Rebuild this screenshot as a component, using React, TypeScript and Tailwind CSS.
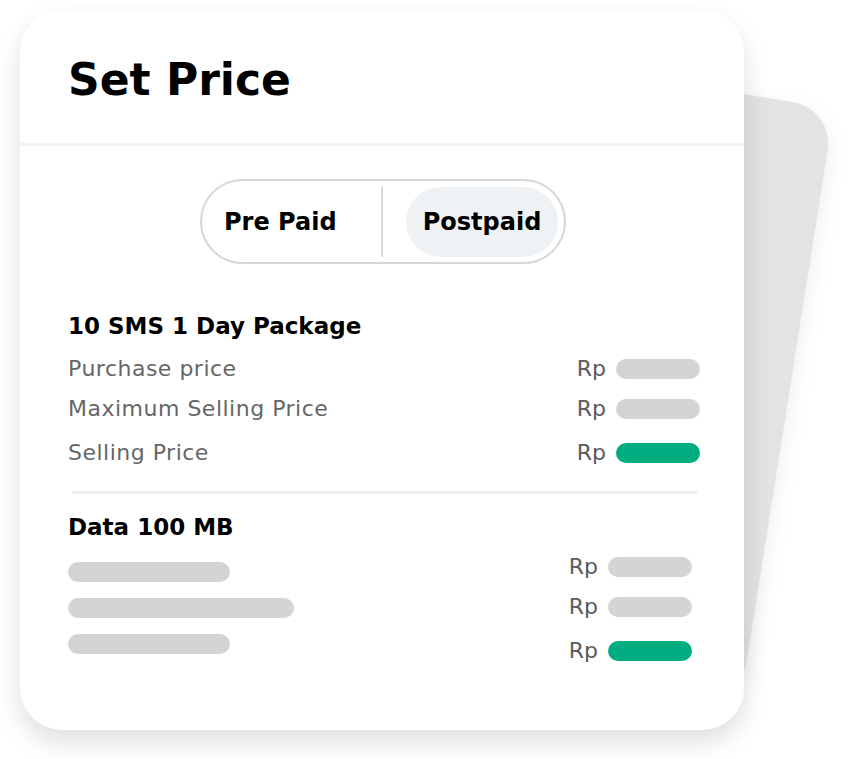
const font = { fontFamily: '"DejaVu Sans", "Liberation Sans", sans-serif' };

interface PriceRow {
  label: string;
  active?: boolean;
}

const smsRows: PriceRow[] = [
  { label: "Purchase price" },
  { label: "Maximum Selling Price" },
  { label: "Selling Price", active: true },
];

function PriceTag({ active }: { active?: boolean }) {
  return (
    <div className="flex items-center gap-[10px]">
      <span className="text-[22px] leading-none text-[#5a5a5a]">Rp</span>
      <div
        className={
          active
            ? "w-[84px] h-[20px] rounded-full bg-[#00ad80]"
            : "w-[84px] h-[20px] rounded-full bg-[#d4d4d6]"
        }
      />
    </div>
  );
}

export default function App() {
  return (
    <div
      className="relative w-[850px] h-[759px] bg-white overflow-hidden"
      style={font}
    >
      {/* tilted card behind */}
      <div className="absolute left-[191px] top-[58px] w-[600px] h-[600px] rounded-[42px] bg-[#e3e3e3] rotate-[9deg] shadow-[0_8px_24px_rgba(0,0,0,0.08)]" />

      <div className="relative ml-[20px] mt-[10px] w-[724px] h-[720px] rounded-[42px] bg-white shadow-[0_12px_26px_rgba(0,0,0,0.13)]">
        {/* header */}
        <div className="h-[133px] pl-[48px] pt-[48px]">
          <h1 className="text-[44px] leading-none font-bold text-black">
            Set Price
          </h1>
        </div>
        <div className="h-[3px] bg-[#f0f2f5]" />

        {/* toggle */}
        <div className="flex justify-center mt-[33px] pl-[2px]">
          <div className="flex items-center w-[366px] h-[85px] rounded-full border-2 border-[#d6d6d6] pr-[6px]">
            <div className="w-[179px] pl-[22px] text-[24px] font-bold leading-none text-black">
              Pre Paid
            </div>
            <div className="w-[2px] h-[70px] bg-[#d9d9d9]" />
            <div className="ml-[23px] w-[152px] h-[70px] rounded-full bg-[#eff2f5] flex items-center justify-center text-[24px] font-bold leading-none text-black">
              Postpaid
            </div>
          </div>
        </div>

        {/* sms package */}
        <div className="mt-[46px] pl-[48px] pr-[44px]">
          <div className="h-[32px] flex items-center text-[23px] font-bold text-black leading-none">
            10 SMS 1 Day Package
          </div>
          <div className="mt-[7px]">
            {smsRows.map((row, i) => (
              <div
                key={row.label}
                className={
                  i === 2
                    ? "mt-[4px] h-[40px] flex items-center justify-between"
                    : "h-[40px] flex items-center justify-between"
                }
              >
                <span className="text-[22px] tracking-[0.5px] leading-none text-[#666666]">
                  {row.label}
                </span>
                <PriceTag active={row.active} />
              </div>
            ))}
          </div>
        </div>

        <div className="mt-[18px] ml-[52px] mr-[47px] h-[3px] bg-[#eff2f5]" />

        {/* data package */}
        <div className="mt-[17px] pl-[48px] pr-[52px]">
          <div className="h-[32px] flex items-center text-[23px] font-bold text-black leading-none">
            Data 100 MB
          </div>
          <div className="mt-[4px] flex justify-between">
            <div className="mt-[15px] flex flex-col gap-[16px]">
              <div className="w-[162px] h-[20px] rounded-full bg-[#d4d4d6]" />
              <div className="w-[226px] h-[20px] rounded-full bg-[#d4d4d6]" />
              <div className="w-[162px] h-[20px] rounded-full bg-[#d4d4d6]" />
            </div>
            <div>
              <div className="h-[40px] flex items-center">
                <PriceTag />
              </div>
              <div className="h-[40px] flex items-center">
                <PriceTag />
              </div>
              <div className="mt-[4px] h-[40px] flex items-center">
                <PriceTag active />
              </div>
            </div>
          </div>
        </div>
      </div>
    </div>
  );
}
